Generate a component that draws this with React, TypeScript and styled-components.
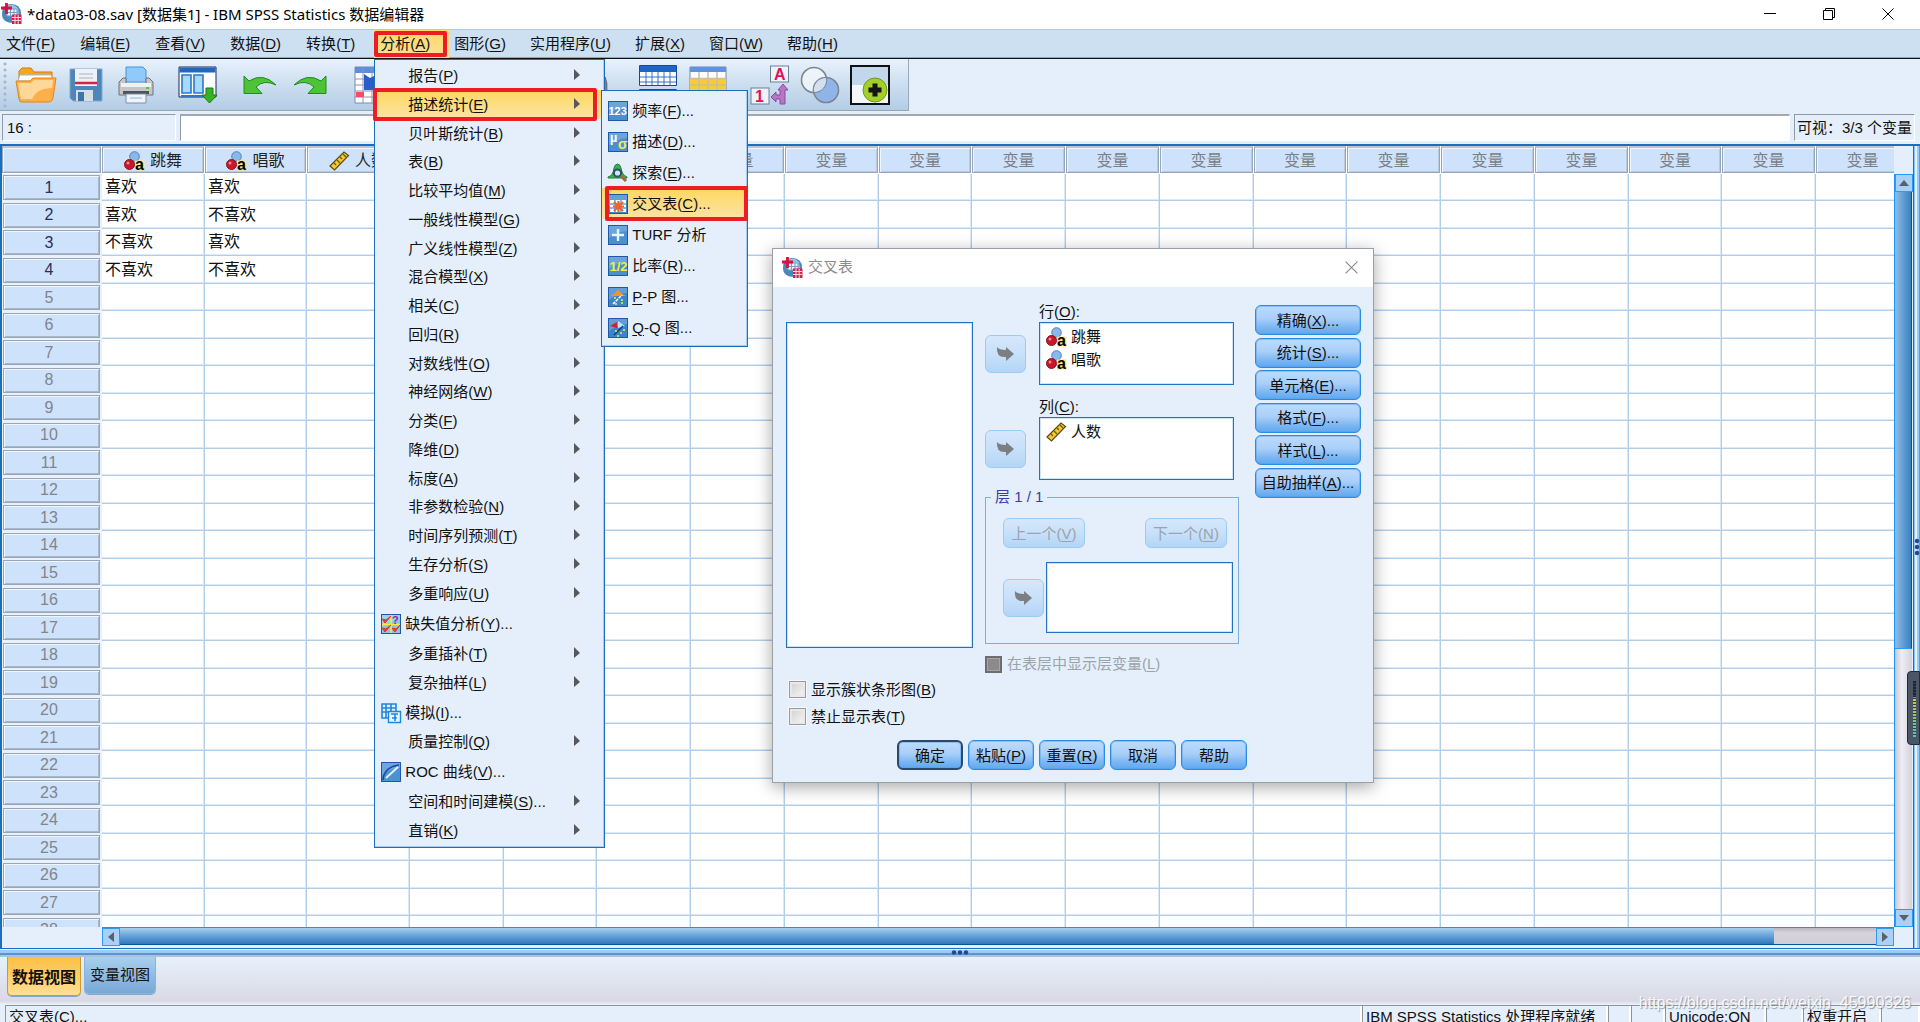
import React from "react";
import styled, { createGlobalStyle, css } from "styled-components";

const UI = `"Liberation Sans", "Noto Sans CJK SC", sans-serif`;
const C = {
  panel: "#e4effb",
  bar: "#cde0f1",
  line: "#1a6ebd",
  head: "#cfe2fb",
  grid: "#b0cde9",
  gridSoft: "#dce8f5",
  mark: "#ee1c25",
};

const Global = createGlobalStyle`
  *, *::before, *::after { box-sizing: border-box; }
  body { margin: 0; overflow: hidden; }
  button, input { font: inherit; color: inherit; margin: 0; }
  ul { list-style: none; margin: 0; padding: 0; }
  svg { display: block; flex: none; overflow: visible; }
`;

const App_ = styled.div`
  position: relative;
  display: flex;
  flex-direction: column;
  height: 100vh;
  overflow: hidden;
  background: ${C.panel};
  color: #111;
  font: 15px/20px ${UI};
`;

/* ---------- title bar ---------- */
const TitleBar = styled.header`
  display: flex;
  align-items: center;
  height: 29px;
  flex: none;
  padding: 0 3px 2px 1px;
  background: #fff;
  color: #000;
`;
const Title = styled.h1`
  flex: 1;
  margin: 0 0 0 5px;
  font: 400 15px/20px "Noto Sans", "Noto Sans CJK SC", sans-serif;
`;
const WinButton = styled.button`
  display: grid;
  place-items: center;
  width: 59px;
  height: 27px;
  padding: 0;
  border: 0;
  background: none;
`;

/* ---------- menus ---------- */
const MenuBar = styled.ul`
  position: relative;
  z-index: 5;
  display: flex;
  height: 30px;
  flex: none;
  background: ${C.bar};
  border-top: 1px solid #b3cbe0;
  border-bottom: 1px solid #111;
  box-shadow: inset 0 -1px #8fa6ba;
`;
const MenuCell = styled.li`
  position: relative;
  &:nth-child(n + 6) { margin-right: -1px; }
`;
const MenuTop = styled.button<{ $open?: boolean }>`
  position: relative;
  height: 28px;
  padding: 0 19px 0 6px;
  border: 0;
  background: ${(p) => (p.$open ? "linear-gradient(#ffd869, #fbdf94)" : "none")};
  white-space: nowrap;
`;
const Mark = styled.span<{ $inset: string }>`
  position: absolute;
  inset: ${(p) => p.$inset};
  border: 4px solid ${C.mark};
  border-radius: 2px;
  z-index: 3;
  pointer-events: none;
`;
const Dropdown = styled.ul`
  position: absolute;
  left: 0;
  top: 29px;
  width: 231px;
  padding: 1px 0 2px;
  background: ${C.panel};
  border: 1px solid ${C.line};
  box-shadow: inset -1px -1px #a9cdef;
`;
const SubDropdown = styled(Dropdown)`
  left: 226px;
  top: 0;
  width: 147px;
  padding: 4px 0 3px;
`;
const DropCell = styled.li<{ $tall?: boolean }>`
  position: relative;
  height: ${(p) => (p.$tall ? 31 : 29)}px;
  ${(p) => !p.$tall && css`&:nth-child(4n) { height: 28px; }`}
`;
const DropItem = styled.button<{ $icon?: boolean; $on?: boolean }>`
  display: flex;
  align-items: center;
  width: 100%;
  height: 100%;
  gap: 4px;
  padding: 0 24px 0 ${(p) => (p.$icon ? 6 : 33)}px;
  border: 0;
  text-align: left;
  white-space: nowrap;
  background: ${(p) => (p.$on ? "linear-gradient(#ffd75f, #fae4a6)" : "none")};
`;
const Grow = styled.span`
  flex: 1;
`;
const Key = styled.u`
  text-underline-offset: 2px;
`;

/* ---------- toolbar ---------- */
const ToolBar = styled.div`
  display: flex;
  align-self: flex-start;
  align-items: center;
  gap: 12px;
  height: 52px;
  flex: none;
  padding: 0 13px 0 3px;
  background: linear-gradient(#e9f2fc, #cfe0f1 45%, #b3cde6);
  border-right: 1px solid #98a9ba;
  border-bottom: 1px solid #98a4b0;
`;
const ToolGroup = styled.div`
  display: flex;
`;
const Grip = styled.span`
  width: 4px;
  height: 48px;
  margin-right: -8px;
  background: radial-gradient(circle, #a9b8c8 1px, transparent 2px) 0 0 / 4px 6px;
`;
const ToolButton = styled.button`
  display: grid;
  place-items: center;
  width: 50px;
  height: 48px;
  padding: 0;
  border: 0;
  background: none;
`;

/* ---------- cell editor ---------- */
const EditRow = styled.div`
  display: flex;
  gap: 4px;
  height: 33px;
  flex: none;
  padding: 3px 5px 3px 2px;
`;
const CellName = styled.output`
  width: 174px;
  padding: 3px 4px;
  border: 1px solid #fff;
  border-top-color: #8e9aa6;
  border-left-color: #8e9aa6;
`;
const CellInput = styled.input`
  flex: 1;
  border: 1px solid #fff;
  border-top: 2px solid #a3a9af;
  border-left-color: #8e9aa6;
  background: #fff;
  outline: none;
`;
const Visible = styled(CellName)`
  width: auto;
  padding: 3px 2px;
  white-space: nowrap;
`;

/* ---------- data grid ---------- */
const Work = styled.main`
  position: relative;
  display: flex;
  flex: 1;
  min-height: 0;
  border-top: 2px solid ${C.line};
  border-left: 2px solid ${C.line};
`;
const GridArea = styled.div`
  flex: 1;
  min-width: 0;
  display: flex;
  flex-direction: column;
`;
const GridClip = styled.div`
  flex: 1;
  min-height: 0;
  overflow: hidden;
  background: #fff;
`;
const Sheet = styled.table`
  table-layout: fixed;
  width: 1908px;
  border-collapse: separate;
  border-spacing: 0;
  font-size: 16px;
  tbody tr { height: 27px; }
  tbody tr:nth-child(even) { height: 28px; }
  th, td { padding: 0; }
  td {
    padding-left: 3px;
    border-right: 1px solid ${C.grid};
    border-bottom: 1px solid ${C.grid};
    box-shadow: inset -1px -1px ${C.gridSoft};
    line-height: 22px;
  }
`;
const ColHead = styled.th`
  height: 28px;
  background: #fff;
  font-weight: 400;
  color: #7a7f86;
`;
const HeadBox = styled.div<{ $dark?: boolean }>`
  display: flex;
  align-items: center;
  justify-content: center;
  gap: 5px;
  height: 27px;
  padding-top: 1px;
  margin: 0 1px 1px 0;
  background: ${C.head};
  border: 1px solid #98a6b8;
  border-top: 2px solid #b9c5d4;
  box-shadow: inset 1px 1px #eef5fe, inset -1px -1px #b9c9de;
  color: ${(p) => (p.$dark ? "#222" : "#7a7f86")};
`;
const RowHead = styled.th<{ $dark?: boolean }>`
  background: #e9f2fc;
  font-weight: 400;
  color: ${(p) => (p.$dark ? "#2a2f5c" : "#7f858c")};
`;
const RowBox = styled.div`
  display: flex;
  align-items: center;
  justify-content: center;
  height: 25px;
  margin: 0 2px 0 1px;
  padding-right: 5px;
  background: ${C.head};
  border: 1px solid #98a6b8;
  box-shadow: inset 1px 1px #eef5fe, inset -1px -1px #a9b7c9;
`;
const VScroll = styled.div`
  display: flex;
  flex-direction: column;
  width: 18px;
  flex: none;
  margin: 28px 1px 21px 0;
  border-left: 1px solid #1f93f5;
  background: linear-gradient(90deg, #c9c8d2, #efeef4 40%, #d3d1db);
`;
const ScrollButton = styled.button`
  display: grid;
  place-items: center;
  width: 18px;
  height: 18px;
  flex: none;
  padding: 0;
  border: 1px solid #2b9bf5;
  background: #a8d0fb;
`;
const VThumb = styled.div`
  height: 457px;
  background: linear-gradient(90deg, #8dbfe6, #74abdb 30%, #3a80c1);
  border-right: 1px solid #0d4f93;
  border-bottom: 1px solid #2b9bf5;
`;
const HScroll = styled.div`
  display: flex;
  height: 18px;
  flex: none;
  margin: 0 0 3px 100px;
  border-top: 1px solid #1f93f5;
  border-bottom: 1px solid #0d4f93;
  background: linear-gradient(#b9b6c2, #d6d3dc 30%, #d0cdd7);
`;
const HThumb = styled.div`
  flex: 1;
  margin-right: 102px;
  background: linear-gradient(#a9d0ee, #6aa6da 45%, #3078bb);
`;
const Edge = styled.div`
  display: grid;
  place-items: center;
  width: 7px;
  flex: none;
  background: linear-gradient(90deg, ${C.line} 0 1px, #8cc4f5 1px 2px, #dff2ff 2px 4px, #9bcbf8 4px 6px, #5f97cf 6px);
`;
const Split = styled.div`
  display: grid;
  place-items: center;
  height: 9px;
  flex: none;
  background: linear-gradient(${C.line} 0 1px, #dff2ff 1px 2px, #9bcbfb 2px 5px, #5f93c9 5px 7px, #a9c2de 7px);
`;
const Meter = styled.div`
  position: absolute;
  right: 0;
  top: 525px;
  width: 13px;
  height: 74px;
  padding: 9px 3px 7px 5px;
  border-radius: 4px 0 0 4px;
  border: 1px solid #222b38;
  background: #4a5566;
`;
const MeterBars = styled.div`
  height: 100%;
  background:
    repeating-linear-gradient(transparent 0 2px, #333d4c 2px 3px),
    linear-gradient(#20262f 28%, #e0bd45 30%, #9ac85a 60%, #34d3c0);
`;

/* ---------- bottom ---------- */
const Tabs = styled.div`
  display: flex;
  align-items: flex-start;
  gap: 3px;
  height: 48px;
  flex: none;
  padding-left: 7px;
  background: linear-gradient(#e6f1fc, #d9d9e5 92%, #eef3fa);
`;
const Tab = styled.button<{ $on?: boolean }>`
  height: ${(p) => (p.$on ? 39 : 37)}px;
  padding: ${(p) => (p.$on ? "4px 4px 0" : "0 5px")};
  border: 1px solid ${(p) => (p.$on ? "#d0992a" : "#88b4dc")};
  border-top: 0;
  border-radius: 0 0 5px 5px;
  background: ${(p) => (p.$on ? "linear-gradient(#fdbf42, #ffdf94)" : "linear-gradient(#a9cfee, #79a8d6)")};
  box-shadow: 0 1px #7fa9cf;
  font-size: ${(p) => (p.$on ? 16 : 15)}px;
  font-weight: ${(p) => (p.$on ? 700 : 400)};
`;
const Status = styled.footer`
  display: grid;
  grid-template-columns: 1fr 246px 23px 34px 101px 37px 78px 39px;
  height: 17px;
  flex: none;
  padding-left: 5px;
`;
const StatusCell = styled.div`
  height: 24px;
  padding: 0 3px;
  line-height: 22px;
  white-space: nowrap;
  border-top: 1px solid #8b949d;
  border-left: 1px solid #8b949d;
  box-shadow: inset -2px 0 #fff;
`;
const Watermark = styled.div`
  position: absolute;
  right: 9px;
  bottom: 8px;
  font-size: 16px;
  line-height: 22px;
  color: rgba(255, 255, 255, 0.9);
  text-shadow: 1px 1px 1px rgba(110, 120, 135, 0.7);
`;

/* ---------- dialog ---------- */
const Dialog = styled.section`
  position: absolute;
  left: 772px;
  top: 248px;
  width: 602px;
  z-index: 4;
  border: 1px solid #9aa0a6;
  background: ${C.panel};
  box-shadow: 0 4px 16px rgba(0, 0, 0, 0.35);
`;
const DialogTitle = styled.header`
  display: flex;
  align-items: center;
  height: 38px;
  padding: 0 0 2px 9px;
  gap: 5px;
  background: #fff;
  color: #8c8c8c;
`;
const DialogName = styled.h2`
  flex: 1;
  margin: 0;
  font-size: 15px;
  font-weight: 400;
`;
const CloseButton = styled(WinButton)`
  width: 43px;
`;
const Columns = styled.div`
  display: flex;
  padding-left: 13px;
`;
const ColLeft = styled.div`
  width: 187px;
  padding-top: 35px;
`;
const ColMid = styled.div`
  display: flex;
  flex-direction: column;
  width: 254px;
  margin-left: 12px;
  padding-top: 15px;
`;
const ColRight = styled.div`
  display: flex;
  flex-direction: column;
  justify-content: space-between;
  width: 106px;
  height: 193px;
  margin: 18px 0 0 16px;
`;
const ListBox = styled.ul<{ $h: number }>`
  flex: 1;
  height: ${(p) => p.$h}px;
  padding: 2px 6px;
  background: #fff;
  border: 1px solid #2272c0;
  box-shadow: inset 0 0 0 1px #cfe3f6;
`;
const ListItem = styled.li`
  display: flex;
  align-items: center;
  gap: 4px;
  height: 23px;
`;
const Field = styled.div`
  margin-bottom: 12px;
`;
const FieldLabel = styled.div`
  height: 20px;
  padding-left: 54px;
`;
const FieldRow = styled.div<{ $gap: number }>`
  display: flex;
  align-items: center;
  gap: ${(p) => p.$gap}px;
`;
const FieldWrap = styled.div`
  padding-right: 5px;
`;
const Button = styled.button<{ $w?: number; $default?: boolean }>`
  width: ${(p) => p.$w ?? 106}px;
  height: 30px;
  padding: 1px 0 0;
  border: ${(p) => (p.$default ? "2px solid #2b4a6b" : "1px solid #2a8be4")};
  border-radius: 6px;
  background: linear-gradient(#bddafc, #a9cff9 45%, #7db7f3 75%, #5fa8ee);
  box-shadow: inset 0 0 0 1px rgba(80, 160, 235, 0.45);
  white-space: nowrap;
  &:disabled {
    border-color: #9bcbf5;
    background: linear-gradient(#d5e7fc, #c8e0fa 50%, #b3d5f7);
    box-shadow: none;
    color: #9ba3ab;
  }
`;
const MoveButton = styled(Button)`
  display: grid;
  place-items: center;
  width: 41px;
  height: 38px;
  padding: 0;
  flex: none;
`;
const Layer = styled.fieldset`
  margin: -5px 0 9px;
  padding: 11px 5px 10px 17px;
  border: 1px solid #7fadd9;
`;
const Legend = styled.legend`
  margin-left: -12px;
  padding: 0 4px;
  color: #3b3ea0;
  line-height: 20px;
`;
const LayerNav = styled.div`
  display: flex;
  justify-content: space-between;
  margin: 0 6px 14px 0;
`;
const Check = styled.label<{ $off?: boolean }>`
  display: flex;
  align-items: center;
  gap: 5px;
  height: ${(p) => (p.$off ? 22 : 27)}px;
  white-space: nowrap;
  color: ${(p) => (p.$off ? "#9ba3ab" : "#111")};
`;
const Box = styled.input`
  appearance: none;
  width: 17px;
  height: 17px;
  border: 1px solid #9a9a9a;
  background: linear-gradient(135deg, #cfcfcf, #f8f8f8);
  box-shadow: inset 0 0 0 2px #e9e9e9, 0 0 0 1px #f4f8fc;
  &:disabled {
    border: 2px solid #6d6d6d;
    background: #8b8b8b;
    box-shadow: inset 0 0 0 1px #a5a5a5;
  }
`;
const Checks = styled.div`
  margin-top: 28px;
  padding-left: 3px;
`;
const Footer = styled.div`
  display: flex;
  justify-content: center;
  gap: 5px;
  padding: 10px 2px 12px 0;
`;

/* ---------- icons ---------- */
const AppIcon = () => (
  <svg width="21" height="21" viewBox="0 0 21 21">
    <path d="M10 1q10 0 10 10 0 9-7 9-12 0-12-9Q1 1 10 1z" fill="#4f86b8" />
    <path d="M5 4q6-5 12 1l1 7H5z" fill="#9fc3e2" />
    <path d="M6 6h10v7H6zM6 9.500h10M9.500 6v7M13 6v7" fill="#eaf3fb" stroke="#6f9fcb" />
    <path d="M5.500 0v11M0 5h11" stroke="#d4113f" strokeWidth="2.800" />
    <path d="M11 11.500h9.500v9.500h-9.500z" fill="#d4214c" />
    <path d="M11 14.500h9M11 17.500h9M14 12v9M17.200 12v9" stroke="#fbd5dd" />
  </svg>
);
const Nominal = () => (
  <svg width="21" height="20" viewBox="0 0 21 20">
    <circle cx="10.500" cy="5.500" r="4.800" fill="#8ab8ea" stroke="#4a83c4" />
    <circle cx="5.500" cy="13.500" r="5" fill="#c8172b" stroke="#8e1020" />
    <circle cx="4" cy="12" r="1.500" fill="#ef8b95" />
    <rect x="11" y="9.500" width="9.500" height="10" fill="#ffe884" />
    <text x="11" y="19" fontSize="16" fontWeight="700" fontFamily="Liberation Sans" fill="#000">a</text>
  </svg>
);
const Ruler = () => (
  <svg width="21" height="20" viewBox="0 0 21 20">
    <path d="M1 15 15 1l4.500 3.500L5.500 19z" fill="#f5c92e" stroke="#5a4a14" strokeWidth="1.200" />
    <path d="m5 12 2 2m1-5 3 3m0-6 2 2m1-5 3 3" stroke="#6b560f" strokeWidth="1.200" />
  </svg>
);
const Tri = ({ d }: { d: string }) => (
  <svg width="12" height="12" viewBox="0 0 12 12">
    <path d={d} fill="#5c5f63" />
  </svg>
);
const UP = "M6 3l5 6H1z";
const DOWN = "M6 9l5-6H1z";
const LEFT = "M3 6l6-5v10z";
const RIGHT = "M9 6L3 1v10z";
const SubArrow = () => (
  <svg width="6" height="14" viewBox="0 0 6 14">
    <path d="M0 0v11l6-5z" fill="#55585c" />
  </svg>
);
const MoveArrow = () => (
  <svg width="19" height="16" viewBox="0 0 19 16">
    <path d="M1 1q2 3 9 3V1l8 7-8 7v-4Q0 12 1 1z" fill="#7c7f82" />
  </svg>
);
const Cross = ({ size, color }: { size: number; color: string }) => (
  <svg width={size} height={size} viewBox="0 0 12 12">
    <path d="M0.500 0.500l11 11M11.500 0.500l-11 11" stroke={color} />
  </svg>
);
const Dots = ({ vertical }: { vertical?: boolean }) => (
  <svg width={vertical ? 5 : 18} height={vertical ? 18 : 5}>
    {[3, 9, 15].map((p) => (
      <circle key={p} cx={vertical ? 3 : p} cy={vertical ? p : 2.5} r="2.200" fill="#23488c" />
    ))}
  </svg>
);
const Tile = ({ children, fill = "#4a8fd0" }: { children?: React.ReactNode; fill?: string }) => (
  <svg width="20" height="20" viewBox="0 0 20 20">
    <rect x="0.500" y="0.500" width="19" height="19" fill={fill} stroke="#2257a8" />
    <path d="M1 1h18v5Q8 7 1 13z" fill="#ffffff" opacity="0.200" />
    {children}
  </svg>
);
const tileText = { fontFamily: "Liberation Sans", fontWeight: 700 } as const;
const SUB_ICONS: Record<string, React.ReactNode> = {
  freq: <Tile><text x="0.500" y="14" fontSize="11" fill="#fff" {...tileText}>123</text></Tile>,
  desc: (
    <Tile>
      <text x="2" y="10" fontSize="12" fill="#fff" {...tileText}>μ</text>
      <text x="10" y="17" fontSize="14" fill="#f1ec5a" {...tileText}>σ</text>
    </Tile>
  ),
  explore: (
    <svg width="20" height="20" viewBox="0 0 20 20">
      <path d="M0 14q5-1 6-9 1-4 3.500-4T13 5q1 7 6 9v1H0z" fill="#3fae52" stroke="#22803a" />
      <circle cx="9.500" cy="10" r="3.600" fill="#cfe6f7" stroke="#31506e" strokeWidth="2" />
      <path d="m13 13 5 5" stroke="#a4693a" strokeWidth="3" />
    </svg>
  ),
  cross: (
    <Tile fill="#3f87cf">
      <path d="M2 6h16v12H2z" fill="#fff" />
      <path d="M2 10h16M2 14h16M7 6v12M13 6v12" stroke="#6aa5de" strokeWidth="1.500" />
      <path d="m6 8 9 9m0-9-9 9m4.500-10v11M5 12.500h11" stroke="#f0622c" strokeWidth="2.200" />
    </Tile>
  ),
  turf: <Tile><path d="M10 4v12M4 10h12" stroke="#e8f4ff" strokeWidth="2.400" /></Tile>,
  ratio: <Tile><text x="1.500" y="15" fontSize="13" fill="#f4ef3c" {...tileText}>1/2</text></Tile>,
  pp: (
    <Tile fill="#3b86cb">
      <path d="m2 9 4-2 4-4 4 4 4 2z" fill="#f7931e" />
      <path d="m5 17 9-9" stroke="#fff" strokeWidth="1.500" strokeDasharray="3 1" />
      <path d="M6 11h2m5 2h2m-8 4h2m4-1h2" stroke="#f4ef3c" strokeWidth="1.600" />
    </Tile>
  ),
  qq: (
    <Tile fill="#3b86cb">
      <path d="m2 8 7-4v6z" fill="#d5202c" />
      <path d="m10 3 7 5-7 2z" fill="#b9e6f5" />
      <path d="m6 17 9-9" stroke="#163a7c" strokeWidth="1.500" />
      <path d="M7 13h2m3 2h2m-5 3h2m4-6h2" stroke="#f4ef3c" strokeWidth="1.500" />
    </Tile>
  ),
  missing: (
    <Tile fill="#8cc3ea">
      <path d="M1 10.500h18M10 1v18" stroke="#f4e94c" strokeWidth="1.600" />
      <path d="m1 5 3 4 6-7-5 4zM1 14l3 4 6-7-5 4zM11 14l3 4 5-7-4 4z" fill="#e8492c" stroke="#d83a22" />
      <text x="11" y="9.500" fontSize="11" fill="#a3189c" {...tileText}>?</text>
    </Tile>
  ),
  sim: (
    <svg width="20" height="20" viewBox="0 0 20 20">
      <path d="M1 1h14v14H1zM1 5h14M1 9h14M5 1v14M10 1v14" fill="#e4effb" stroke="#1e87dd" strokeWidth="1.600" />
      <path d="M7.500 8.500h12v11h-12z" fill="#e9f4ff" stroke="#1e87dd" strokeWidth="1.400" />
      <path d="M10 11h7M14 11v7M11 15h5" stroke="#1e87dd" strokeWidth="1.600" />
    </svg>
  ),
  roc: (
    <Tile fill="#4a92d3">
      <path d="M2 18Q3 5 18 3" fill="none" stroke="#174a9c" strokeWidth="1.500" />
      <path d="m5 16 12-11" stroke="#e6f3ff" strokeWidth="1.800" />
    </Tile>
  ),
};

const Folder = () => (
  <svg width="42" height="36" viewBox="0 0 42 36">
    <path d="M4 30V4l3-3h9l3 4h18v25z" fill="#f9a61f" stroke="#d77a08" />
    <path d="M5 8h31l2 6H3z" fill="#fff" stroke="#8fc0ea" />
    <path d="M1 14h14l3-3h23l-3 20q-1 4-4 4H7q-3 0-3-3z" fill="#fdb04a" stroke="#e8830f" />
    <path d="M3 16h13l3-3h19l-1 8q-15 0-20 11H6z" fill="#fee2ac" opacity="0.800" />
  </svg>
);
const Floppy = () => (
  <svg width="34" height="34" viewBox="0 0 34 34">
    <path d="M1 1h32v32H4l-3-3z" fill="#4f86b9" stroke="#7faad0" />
    <path d="M6 1h22v17H6z" fill="#eef1f5" />
    <path d="M10 6h14M10 10h14" stroke="#c3c9d0" strokeWidth="1.500" />
    <path d="M6 15h22" stroke="#d0234d" strokeWidth="2.500" />
    <path d="M7 22h17v11H7z" fill="#d7dde4" />
    <path d="M9 24h6v9H9z" fill="#3d75ab" />
  </svg>
);
const Printer = () => (
  <svg width="36" height="38" viewBox="0 0 36 38">
    <path d="M8 1h17l3 3v12H8z" fill="#8fcafa" stroke="#4a94d4" />
    <path d="M5 12h3v6h20v-6h3l4 4v13H1V16z" fill="#c4c6c9" stroke="#6f7276" />
    <path d="M3 17h30v4H3z" fill="#f0f1f2" />
    <path d="M5 25h26v3H5z" fill="#4f5256" />
    <path d="M28 22h3" stroke="#4ecb3c" strokeWidth="2" />
    <path d="M8 28h20v9H8z" fill="#eef5fc" stroke="#7d8fa1" />
    <path d="M12 32h12" stroke="#8fb6da" />
  </svg>
);
const Recall = () => (
  <svg width="40" height="38" viewBox="0 0 40 38">
    <path d="M1 1h37v30H1z" fill="#fff" stroke="#1d2b57" />
    <path d="M1.500 1.500h36v5h-36z" fill="#2566bd" />
    <path d="M4 9h9v18H4zM16 9h9v18h-9z" fill="#a8d8fa" stroke="#2b78c9" strokeWidth="1.600" />
    <path d="M3 30h22" stroke="#2b78c9" strokeWidth="2" />
    <path d="M28 22h7v7h4l-7.500 8-7.500-8h4z" fill="#35b226" stroke="#167a12" />
  </svg>
);
const Undo = ({ flip }: { flip?: boolean }) => (
  <svg width="34" height="20" viewBox="0 0 34 20">
    <path
      transform={flip ? "translate(34 0) scale(-1 1)" : undefined}
      d="M1 1l5 5Q20-3 33 10 21 4 13 12l6 6.500H1z"
      fill="#4fc338"
      stroke="#1f8c1b"
    />
  </svg>
);
const GoCase = () => (
  <svg width="36" height="38" viewBox="0 0 36 38">
    <path d="M1 1h34v36H1z" fill="#fff" stroke="#7d88a8" />
    <path d="M1 1h34v6H1z" fill="#5b8fdd" />
    <path d="M1 13h34M1 19h34M1 25h34M1 31h34M9 1v36M18 1v36M27 1v36" stroke="#8b93b0" />
    <path d="M2 26h8v5H2z" fill="#ef4f63" />
    <path d="M10 8l6 4 8-4v16H10z" fill="#2a5ec5" />
  </svg>
);
const Binoculars = () => (
  <svg width="24" height="28" viewBox="0 0 30 36">
    <path d="M3 8h8v26H1V16zM19 8h8l2 8v18H19zM11 14h8v8h-8z" fill="#7d8185" stroke="#555" />
  </svg>
);
const SplitFile = () => (
  <svg width="38" height="40" viewBox="0 0 38 40">
    {[0, 24].map((y) => (
      <g key={y} transform={`translate(0 ${y})`}>
        <path d="M0.500 0.500h37v20h-37z" fill="#fff" stroke="#154a9e" />
        <path d="M1 1h36v6H1z" fill="#1f66c4" />
        <path d="M1 12h36M1 17h36M7 7v13M13 7v13M19 7v13M25 7v13M31 7v13" stroke="#2d73cc" />
      </g>
    ))}
  </svg>
);
const Weight = () => (
  <svg width="38" height="38" viewBox="0 0 38 38">
    <path d="M1 1h36v36H1z" fill="#fff" stroke="#7787a8" />
    <path d="M1 1h36v5H1z" fill="#5f93e2" />
    <path d="M1 13h36v24H1z" fill="#f6cd36" />
    <path d="M1 12.500h36M1 19h36M1 25h36M1 31h36M10 6v31M19 6v31M28 6v31" stroke="#c9bfa0" strokeWidth="1.500" />
  </svg>
);
const ValueLabels = () => (
  <svg width="40" height="40" viewBox="0 0 40 40">
    <rect x="20.500" y="1" width="18" height="16" fill="#eef3f9" stroke="#6d8098" />
    <text x="24" y="15" fontSize="16" fill="#e0125a" {...tileText}>A</text>
    <rect x="1" y="23" width="18" height="16" fill="#eef3f9" stroke="#6d8098" />
    <text x="5" y="37" fontSize="16" fill="#e0125a" {...tileText}>1</text>
    <path d="M33 19l5 6h-3v14h-5v-5h-4v3l-5-5 5-5v3h4v-5h-2z" fill="#b975c6" stroke="#8d4a9d" />
  </svg>
);
const Sets = () => (
  <svg width="40" height="40" viewBox="0 0 40 40">
    <circle cx="14" cy="15" r="12.500" fill="#f3f6fa" fillOpacity="0.800" stroke="#7d8590" strokeWidth="1.600" />
    <circle cx="26" cy="25" r="12.500" fill="#86aee8" fillOpacity="0.850" stroke="#7d8590" strokeWidth="1.600" />
    <path d="M13.600 27.500A12.500 12.500 0 0 1 26.400 12.500 12.500 12.500 0 0 1 13.600 27.500z" fill="#d3e0f2" stroke="#7d8590" />
  </svg>
);
const AddBox = () => (
  <svg width="40" height="40" viewBox="0 0 40 40">
    <rect x="1" y="1" width="38" height="38" fill="#d8e6f4" stroke="#111" strokeWidth="2" />
    <path d="M2 2h36v18H2z" fill="#c3d7ec" />
    <path d="M2 20h36v18H2z" fill="#f2f7fc" />
    <circle cx="25" cy="25" r="12" fill="#a2cf2a" stroke="#6f9a12" />
    <path d="M25 18.500v13M18.500 25h13" stroke="#151515" strokeWidth="5" />
  </svg>
);

/* ---------- data ---------- */
const MENUS: [string, string][] = [
  ["文件", "F"], ["编辑", "E"], ["查看", "V"], ["数据", "D"], ["转换", "T"], ["分析", "A"],
  ["图形", "G"], ["实用程序", "U"], ["扩展", "X"], ["窗口", "W"], ["帮助", "H"],
];
type Item = { t: string; k: string; icon?: string; dots?: boolean };
const ANALYZE: Item[] = [
  { t: "报告", k: "P" }, { t: "描述统计", k: "E" }, { t: "贝叶斯统计", k: "B" }, { t: "表", k: "B" },
  { t: "比较平均值", k: "M" }, { t: "一般线性模型", k: "G" }, { t: "广义线性模型", k: "Z" },
  { t: "混合模型", k: "X" }, { t: "相关", k: "C" }, { t: "回归", k: "R" }, { t: "对数线性", k: "O" },
  { t: "神经网络", k: "W" }, { t: "分类", k: "F" }, { t: "降维", k: "D" }, { t: "标度", k: "A" },
  { t: "非参数检验", k: "N" }, { t: "时间序列预测", k: "T" }, { t: "生存分析", k: "S" },
  { t: "多重响应", k: "U" }, { t: "缺失值分析", k: "Y", icon: "missing", dots: true },
  { t: "多重插补", k: "T" }, { t: "复杂抽样", k: "L" }, { t: "模拟", k: "I", icon: "sim", dots: true },
  { t: "质量控制", k: "Q" }, { t: "ROC 曲线", k: "V", icon: "roc", dots: true },
  { t: "空间和时间建模", k: "S", dots: true }, { t: "直销", k: "K" },
];
const SUB: { icon: string; label: React.ReactNode; on?: boolean }[] = [
  { icon: "freq", label: <>频率(<Key>F</Key>)...</> },
  { icon: "desc", label: <>描述(<Key>D</Key>)...</> },
  { icon: "explore", label: <>探索(<Key>E</Key>)...</> },
  { icon: "cross", label: <>交叉表(<Key>C</Key>)...</>, on: true },
  { icon: "turf", label: <>TURF 分析</> },
  { icon: "ratio", label: <>比率(<Key>R</Key>)...</> },
  { icon: "pp", label: <><Key>P</Key>-P 图...</> },
  { icon: "qq", label: <><Key>Q</Key>-Q 图...</> },
];
const DATA = [["喜欢", "喜欢"], ["喜欢", "不喜欢"], ["不喜欢", "喜欢"], ["不喜欢", "不喜欢"]];
const SIDE: [string, string][] = [
  ["精确", "X"], ["统计", "S"], ["单元格", "E"], ["格式", "F"], ["样式", "L"], ["自助抽样", "A"],
];
const TOOLS: [string, React.ReactNode][][] = [
  [["打开", <Folder />], ["保存", <Floppy />], ["打印", <Printer />]],
  [["重新调用对话框", <Recall />]],
  [["撤销", <Undo />], ["重做", <Undo flip />]],
  [["转到个案", <GoCase />], ["转到变量", <GoCase />], ["变量", <GoCase />]],
  [["运行描述统计", <GoCase />]],
  [["查找", <Binoculars />]],
  [["拆分文件", <SplitFile />], ["个案加权", <Weight />]],
  [["值标签", <ValueLabels />], ["使用变量集", <Sets />], ["显示所有变量", <AddBox />]],
];
const EMPTY_COLS = 16;
const colWidth = (i: number) => (i % 4 === 1 ? 93 : 94);

const Label = ({ t, k, dots }: { t: string; k: string; dots?: boolean }) => (
  <span>{t}(<Key>{k}</Key>){dots ? "..." : ""}</span>
);

function AnalyzeMenu() {
  return (
    <Dropdown role="menu">
      {ANALYZE.map((m, i) => (
        <DropCell key={i} $tall={!!m.icon}>
          <DropItem role="menuitem" $icon={!!m.icon} $on={i === 1}>
            {m.icon && SUB_ICONS[m.icon]}
            <Label {...m} />
            <Grow />
            {!m.icon && <SubArrow />}
          </DropItem>
          {i === 1 && (
            <>
              <SubDropdown role="menu">
                {SUB.map((s) => (
                  <DropCell key={s.icon} $tall>
                    <DropItem role="menuitem" $icon $on={s.on}>
                      {SUB_ICONS[s.icon]}
                      <span>{s.label}</span>
                    </DropItem>
                    {s.on && <Mark $inset="-2px -1px -2px 3px" />}
                  </DropCell>
                ))}
              </SubDropdown>
              <Mark $inset="-2px 7px -2px -2px" />
            </>
          )}
        </DropCell>
      ))}
    </Dropdown>
  );
}

function DataSheet() {
  return (
    <Sheet>
      <colgroup>
        <col style={{ width: 100 }} />
        <col style={{ width: 103 }} />
        <col style={{ width: 102 }} />
        <col style={{ width: 103 }} />
        {Array.from({ length: EMPTY_COLS }, (_, i) => (
          <col key={i} style={{ width: colWidth(i) }} />
        ))}
      </colgroup>
      <thead>
        <tr>
          <ColHead><HeadBox /></ColHead>
          <ColHead><HeadBox $dark><Nominal />跳舞</HeadBox></ColHead>
          <ColHead><HeadBox $dark><Nominal />唱歌</HeadBox></ColHead>
          <ColHead><HeadBox $dark><Ruler />人数</HeadBox></ColHead>
          {Array.from({ length: EMPTY_COLS }, (_, i) => (
            <ColHead key={i}><HeadBox>变量</HeadBox></ColHead>
          ))}
        </tr>
      </thead>
      <tbody>
        {Array.from({ length: 28 }, (_, r) => (
          <tr key={r}>
            <RowHead $dark={r < 4}><RowBox>{r + 1}</RowBox></RowHead>
            {Array.from({ length: EMPTY_COLS + 3 }, (_, c) => (
              <td key={c}>{DATA[r]?.[c] ?? ""}</td>
            ))}
          </tr>
        ))}
      </tbody>
    </Sheet>
  );
}

function CrosstabsDialog() {
  return (
    <Dialog role="dialog" aria-labelledby="dlg">
      <DialogTitle>
        <AppIcon />
        <DialogName id="dlg">交叉表</DialogName>
        <CloseButton aria-label="关闭"><Cross size={13} color="#888" /></CloseButton>
      </DialogTitle>
      <Columns>
        <ColLeft>
          <ListBox $h={326} role="listbox" aria-label="变量列表" />
          <Checks>
            <Check><Box type="checkbox" /><Label t="显示簇状条形图" k="B" /></Check>
            <Check><Box type="checkbox" /><Label t="禁止显示表" k="T" /></Check>
          </Checks>
        </ColLeft>
        <ColMid>
          <FieldWrap>
            <Field>
              <FieldLabel id="rows"><Label t="行" k="O" />:</FieldLabel>
              <FieldRow $gap={13}>
                <MoveButton disabled aria-label="移动到行"><MoveArrow /></MoveButton>
                <ListBox $h={63} role="listbox" aria-labelledby="rows">
                  <ListItem><Nominal />跳舞</ListItem>
                  <ListItem><Nominal />唱歌</ListItem>
                </ListBox>
              </FieldRow>
            </Field>
            <Field>
              <FieldLabel id="cols"><Label t="列" k="C" />:</FieldLabel>
              <FieldRow $gap={13}>
                <MoveButton disabled aria-label="移动到列"><MoveArrow /></MoveButton>
                <ListBox $h={63} role="listbox" aria-labelledby="cols">
                  <ListItem><Ruler />人数</ListItem>
                </ListBox>
              </FieldRow>
            </Field>
          </FieldWrap>
          <Layer>
            <Legend>层 1 / 1</Legend>
            <LayerNav>
              <Button $w={82} disabled><Label t="上一个" k="V" /></Button>
              <Button $w={82} disabled><Label t="下一个" k="N" /></Button>
            </LayerNav>
            <FieldRow $gap={2}>
              <MoveButton disabled aria-label="移动到层"><MoveArrow /></MoveButton>
              <ListBox $h={71} role="listbox" aria-label="层" />
            </FieldRow>
          </Layer>
          <Check $off><Box type="checkbox" disabled /><Label t="在表层中显示层变量" k="L" /></Check>
        </ColMid>
        <ColRight>
          {SIDE.map(([t, k]) => (
            <Button key={t}><Label t={t} k={k} dots /></Button>
          ))}
        </ColRight>
      </Columns>
      <Footer>
        <Button $w={66} $default>确定</Button>
        <Button $w={66}><Label t="粘贴" k="P" /></Button>
        <Button $w={66}><Label t="重置" k="R" /></Button>
        <Button $w={66}>取消</Button>
        <Button $w={66}>帮助</Button>
      </Footer>
    </Dialog>
  );
}

export default function App() {
  return (
    <App_>
      <Global />
      <TitleBar>
        <AppIcon />
        <Title>*data03-08.sav [数据集1] - IBM SPSS Statistics 数据编辑器</Title>
        <WinButton aria-label="最小化"><svg width="12" height="12"><path d="M0 5.500h12" stroke="#000" /></svg></WinButton>
        <WinButton aria-label="还原">
          <svg width="12" height="12">
            <path d="M0.500 2.500h9v9h-9zM2.500 2.500v-2h9v9h-2" fill="none" stroke="#000" />
          </svg>
        </WinButton>
        <WinButton aria-label="关闭"><Cross size={12} color="#000" /></WinButton>
      </TitleBar>
      <MenuBar>
        {MENUS.map(([t, k]) => (
          <MenuCell key={t}>
            <MenuTop $open={k === "A"}>
              <Label t={t} k={k} />
              {k === "A" && <Mark $inset="1px 2px 1px 0" />}
            </MenuTop>
            {k === "A" && <AnalyzeMenu />}
          </MenuCell>
        ))}
      </MenuBar>
      <ToolBar>
        <Grip />
        {TOOLS.map((g, i) => (
          <ToolGroup key={i}>
            {g.map(([name, icon]) => (
              <ToolButton key={name} aria-label={name}>{icon}</ToolButton>
            ))}
          </ToolGroup>
        ))}
      </ToolBar>
      <EditRow>
        <CellName>16 :</CellName>
        <CellInput aria-label="单元格值" />
        <Visible>可视：3/3 个变量</Visible>
      </EditRow>
      <Work>
        <GridArea>
          <GridClip><DataSheet /></GridClip>
          <HScroll>
            <ScrollButton aria-label="向左"><Tri d={LEFT} /></ScrollButton>
            <HThumb />
            <ScrollButton aria-label="向右"><Tri d={RIGHT} /></ScrollButton>
          </HScroll>
        </GridArea>
        <VScroll>
          <ScrollButton aria-label="向上"><Tri d={UP} /></ScrollButton>
          <VThumb />
          <Grow />
          <ScrollButton aria-label="向下"><Tri d={DOWN} /></ScrollButton>
        </VScroll>
        <Edge><Dots vertical /></Edge>
        <Meter><MeterBars /></Meter>
      </Work>
      <Split><Dots /></Split>
      <Tabs>
        <Tab $on>数据视图</Tab>
        <Tab>变量视图</Tab>
      </Tabs>
      <Status>
        <StatusCell>交叉表(C)...</StatusCell>
        <StatusCell>IBM SPSS Statistics 处理程序就绪</StatusCell>
        <StatusCell />
        <StatusCell />
        <StatusCell>Unicode:ON</StatusCell>
        <StatusCell />
        <StatusCell>权重开启</StatusCell>
        <StatusCell />
      </Status>
      <Watermark>https://blog.csdn.net/weixin_45990326</Watermark>
      <CrosstabsDialog />
    </App_>
  );
}
